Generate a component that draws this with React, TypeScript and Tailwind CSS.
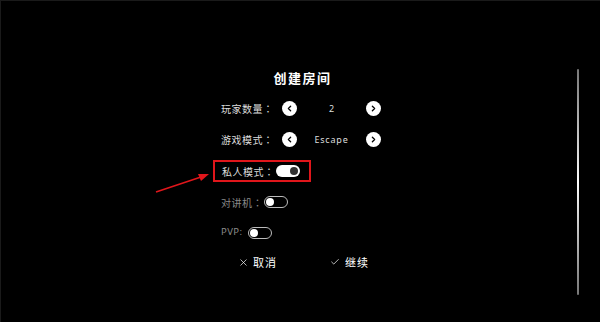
import { Check, ChevronLeft, ChevronRight, X } from 'lucide-react';

const font = { fontFamily: '"Noto Sans CJK SC", "Noto Sans", sans-serif' };
const latin = { fontFamily: '"Noto Sans", "Noto Sans CJK SC", sans-serif' };
const tc = { fontFamily: '"Noto Sans CJK TC", sans-serif' };

const Label = ({ text, className }: { text: string; className: string }) => (
  <span className={className}>
    {text}
    <span style={tc}>：</span>
  </span>
);

const ArrowBtn = ({ dir }: { dir: 'left' | 'right' }) => (
  <div className="w-[15px] h-[15px] rounded-full bg-white flex items-center justify-center">
    {dir === 'left' ? (
      <ChevronLeft className="w-[9px] h-[9px] text-black" strokeWidth={3.5} />
    ) : (
      <ChevronRight className="w-[9px] h-[9px] text-black" strokeWidth={3.5} />
    )}
  </div>
);

const Toggle = ({ on }: { on: boolean }) =>
  on ? (
    <div className="w-[24px] h-[12px] rounded-full bg-white flex items-center justify-end pr-[2px]">
      <div className="w-[8px] h-[8px] rounded-full bg-[#333]" />
    </div>
  ) : (
    <div className="w-[24px] h-[12px] rounded-full border border-[#bbb] bg-black flex items-center pl-[1px]">
      <div className="w-[8px] h-[8px] rounded-full bg-white" />
    </div>
  );

export default function App() {
  return (
    <div className="relative w-[600px] h-[322px] bg-black overflow-hidden border-l border-t border-[#1a1a1a]" style={font}>
      <div className="flex flex-col">
        {/* title */}
        <div className="h-[78px] pt-[68px] flex justify-center pl-[4px]">
          <span className="text-[13px] leading-[18px] font-bold tracking-[1.5px] text-white">创建房间</span>
        </div>

        <div className="flex flex-col pl-[220px] pt-[14px]">
          {/* player count */}
          <div className="h-[31px] flex items-center">
            <Label text="玩家数量" className="w-[61px] text-[10px] tracking-[0.5px] text-[#ddd]" />
            <ArrowBtn dir="left" />
            <span className="w-[69px] text-center text-[9px] text-[#ddd]" style={latin}>2</span>
            <ArrowBtn dir="right" />
          </div>

          {/* game mode */}
          <div className="h-[31px] flex items-center">
            <Label text="游戏模式" className="w-[61px] text-[10px] tracking-[0.5px] text-[#ddd]" />
            <ArrowBtn dir="left" />
            <span className="w-[69px] text-center text-[9px] tracking-[0.8px] text-[#ddd]" style={latin}>Escape</span>
            <ArrowBtn dir="right" />
          </div>

          {/* private mode, highlighted */}
          <div className="h-[32px] flex items-center">
            <div className="-ml-[8px] w-[98px] h-[22px] border-2 border-[#e0161b] flex items-center pl-[7px]">
              <Label text="私人模式" className="text-[10px] tracking-[0.5px] text-[#ddd] mr-[1px]" />
              <Toggle on />
            </div>
          </div>

          {/* voice */}
          <div className="h-[30px] flex items-center">
            <Label text="对讲机" className="text-[10px] tracking-[0.5px] text-[#8a8a8a] mr-[1px]" />
            <Toggle on={false} />
          </div>

          {/* pvp */}
          <div className="h-[31px] flex items-center">
            <span className="text-[9.5px] tracking-[0.4px] text-[#8a8a8a] mr-[6px]" style={latin}>PVP:</span>
            <Toggle on={false} />
          </div>

          {/* actions */}
          <div className="h-[28px] flex items-center pl-[17px]">
            <div className="flex items-center gap-[4px] text-white">
              <X className="w-[11px] h-[11px]" strokeWidth={1.5} />
              <span className="text-[11px] tracking-[1px]">取消</span>
            </div>
            <div className="flex items-center gap-[5px] text-white ml-[53px]">
              <Check className="w-[10px] h-[10px]" strokeWidth={1.75} />
              <span className="text-[11px] tracking-[1px]">继续</span>
            </div>
          </div>
        </div>
      </div>

      {/* annotation arrow */}
      <svg className="absolute left-0 top-0 pointer-events-none" width="600" height="322">
        <line x1="155" y1="191" x2="200" y2="176" stroke="#e0161b" strokeWidth="1.5" />
        <polygon points="208,173 197,173 200,180" fill="#e0161b" />
      </svg>

      {/* scrollbar */}
      <div className="absolute left-[576px] top-[68px] w-[2px] h-[226px] rounded-full bg-gradient-to-b from-[#777] via-white via-50% to-[#777]" />
    </div>
  );
}
